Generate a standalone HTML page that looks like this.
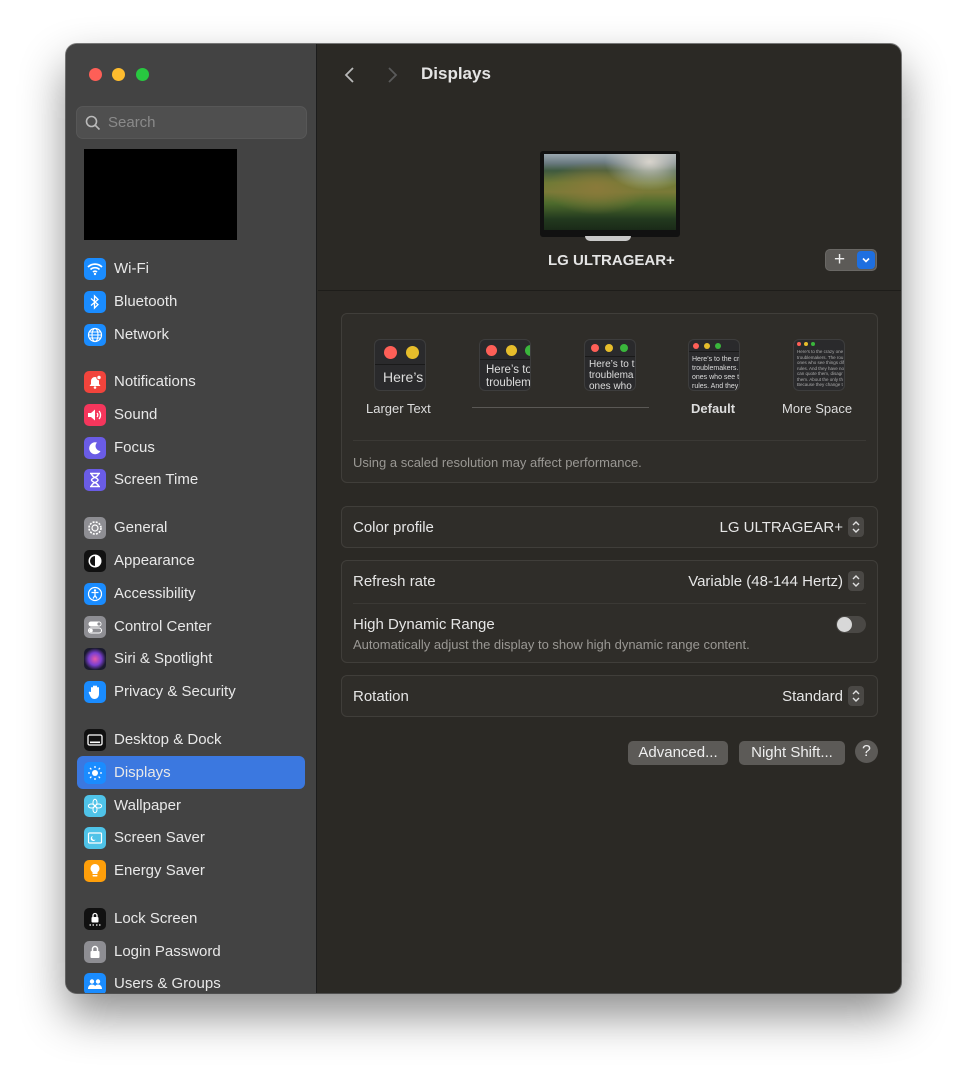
<!DOCTYPE html>
<html><head><meta charset="utf-8"><style>
*{box-sizing:border-box;margin:0;padding:0}
body{width:966px;height:1080px;background:#fff;font-family:"Liberation Sans",sans-serif;position:relative;overflow:hidden}
.win{position:absolute;left:66px;top:44px;width:835px;height:949px;border-radius:11px;overflow:hidden;background:#2b2925;box-shadow:0 22px 45px rgba(0,0,0,.45),0 0 0 1px rgba(0,0,0,.5)}
.side{position:absolute;left:0;top:0;width:251px;height:100%;background:#434343;border-right:1px solid #1c1c1c}
.dot{position:absolute;top:24px;width:13px;height:13px;border-radius:50%}
.search{position:absolute;left:10px;top:62px;width:231px;height:33px;border-radius:7px;background:#4f4f4f;border:1px solid #575757;color:#8a8a8a;font-size:15px;line-height:31px;padding-left:31px}
.item{position:absolute;left:18px;height:24px;color:#e8e8e8;font-size:15px;line-height:24px;padding-left:30px;white-space:nowrap}
.ic{position:absolute;left:0;top:1px;width:22px;height:22px;border-radius:5px;display:flex;align-items:center;justify-content:center;color:#fff;font-size:13px}
.sel{position:absolute;left:11px;top:712px;width:228px;height:33px;border-radius:6px;background:#3b78e0}
.main{position:absolute;left:252px;top:0;right:0;height:100%}
.t{position:absolute;color:#e6e6e6;white-space:nowrap}
.box{position:absolute;left:23px;width:537px;border:1px solid #403e3a;background:#2f2d29;border-radius:6px}
.pop{display:inline-block;width:16px;height:20px;background:#4a4845;border-radius:4px;vertical-align:middle;margin-left:5px;position:relative;top:-1px}
.th{position:absolute;top:295px;width:52px;height:52px;border-radius:6px;background:#2a2a2c;border:1px solid #3d3d3d;overflow:hidden}
.th .bar{border-bottom:1px solid #1a1a1a;position:relative}
.th i{position:absolute;border-radius:50%}
.th p{color:#ddd;white-space:nowrap;padding-left:4px}
.btn{position:absolute;top:697px;height:24px;border-radius:5px;background:#5c5a57;color:#eee;font-size:15px;line-height:24px;text-align:center}
</style></head><body>
<div class="win">
 <div class="side">
  <div class="dot" style="left:23px;background:#fe5f57"></div>
  <div class="dot" style="left:46px;background:#febc2e"></div>
  <div class="dot" style="left:70px;background:#28c840"></div>
  <div class="search"><svg style="position:absolute;left:8px;top:8px" width="16" height="16" viewBox="0 0 16 16"><circle cx="6.5" cy="6.5" r="5" fill="none" stroke="#bbb" stroke-width="1.6"/><path d="M10 10l4.5 4.5" stroke="#bbb" stroke-width="1.6"/></svg>Search</div>
  <div style="position:absolute;left:18px;top:105px;width:153px;height:91px;background:#000"></div>
  <div class="sel"></div>
  <div class="item" style="top:213px"><span class="ic" style="background:#1a8cff">
   <svg width="16" height="14" viewBox="0 0 16 14"><path d="M1 5a10 10 0 0 1 14 0M3.5 7.5a6.5 6.5 0 0 1 9 0M6 10a3 3 0 0 1 4 0" fill="none" stroke="#fff" stroke-width="1.7"/><circle cx="8" cy="12" r="1.2" fill="#fff"/></svg></span>Wi-Fi</div>
  <div class="item" style="top:246px"><span class="ic" style="background:#1a8cff">
   <svg width="10" height="16" viewBox="0 0 10 16"><path d="M1 4.5l7 6-3.5 3.5V2L8 5.5 1 11.5" fill="none" stroke="#fff" stroke-width="1.3"/></svg></span>Bluetooth</div>
  <div class="item" style="top:279px"><span class="ic" style="background:#1a8cff">
   <svg width="16" height="16" viewBox="0 0 16 16"><circle cx="8" cy="8" r="6.5" fill="none" stroke="#fff" stroke-width="1.2"/><ellipse cx="8" cy="8" rx="3" ry="6.5" fill="none" stroke="#fff" stroke-width="1.1"/><path d="M1.5 8h13M2.5 5h11M2.5 11h11" stroke="#fff" stroke-width="1"/></svg></span>Network</div>
  <div class="item" style="top:326px"><span class="ic" style="background:#f2443c">
   <svg width="14" height="14" viewBox="0 0 14 14"><path d="M7 2a4 4 0 0 0-4 4v3L1.5 11h11L11 9V6a4 4 0 0 0-4-4z" fill="#fff"/><circle cx="7" cy="12.5" r="1.3" fill="#fff"/><circle cx="11" cy="2.5" r="2.2" fill="#fff" stroke="#f2443c"/></svg></span>Notifications</div>
  <div class="item" style="top:359px"><span class="ic" style="background:#f5365c">
   <svg width="16" height="14" viewBox="0 0 16 14"><path d="M1 5h3l4-3.5v11L4 9H1z" fill="#fff"/><path d="M10 5a3 3 0 0 1 0 4M12 3a6 6 0 0 1 0 8" fill="none" stroke="#fff" stroke-width="1.3"/></svg></span>Sound</div>
  <div class="item" style="top:392px"><span class="ic" style="background:#6a5ce6">
   <svg width="14" height="14" viewBox="0 0 14 14"><path d="M9 1.5A6 6 0 1 0 12.5 10 5 5 0 0 1 9 1.5z" fill="#fff"/></svg></span>Focus</div>
  <div class="item" style="top:424px"><span class="ic" style="background:#6a5ce6">
   <svg width="12" height="16" viewBox="0 0 12 16"><path d="M1 1.5h10M1 14.5h10M2.5 1.5c0 4 6.5 4 6.5 6.5S2.5 10.5 2.5 14.5M9.5 1.5c0 4-7 4-7 6.5s7 2.5 7 6.5" fill="none" stroke="#fff" stroke-width="1.4"/></svg></span>Screen Time</div>
  <div class="item" style="top:472px"><span class="ic" style="background:#8e8e93">
   <svg width="16" height="16" viewBox="0 0 16 16"><circle cx="8" cy="8" r="6" fill="none" stroke="#fff" stroke-width="1.6" stroke-dasharray="2 1.2"/><circle cx="8" cy="8" r="3" fill="none" stroke="#fff" stroke-width="1.2"/></svg></span>General</div>
  <div class="item" style="top:505px"><span class="ic" style="background:#111">
   <svg width="16" height="16" viewBox="0 0 16 16"><circle cx="8" cy="8" r="6.5" fill="#fff"/><path d="M8 3a5 5 0 0 0 0 10z" fill="#111"/></svg></span>Appearance</div>
  <div class="item" style="top:538px"><span class="ic" style="background:#1a8cff">
   <svg width="16" height="16" viewBox="0 0 16 16"><circle cx="8" cy="8" r="6.5" fill="none" stroke="#fff" stroke-width="1.2"/><circle cx="8" cy="4.5" r="1.2" fill="#fff"/><path d="M4.5 6.5h7M8 6.5v3l-2 3M8 9.5l2 3" fill="none" stroke="#fff" stroke-width="1.2"/></svg></span>Accessibility</div>
  <div class="item" style="top:571px"><span class="ic" style="background:#8e8e93">
   <svg width="16" height="14" viewBox="0 0 16 14"><rect x="1.5" y="1.5" width="13" height="5" rx="2.5" fill="#fff"/><rect x="1.5" y="8" width="13" height="5" rx="2.5" fill="none" stroke="#fff"/><circle cx="12" cy="4" r="1.6" fill="#8e8e93"/><circle cx="4" cy="10.5" r="1.8" fill="#fff"/></svg></span>Control Center</div>
  <div class="item" style="top:603px"><span class="ic" style="background:radial-gradient(circle,#e85aa8 0,#7a3fd0 40%,#1a1a2e 70%)"></span>Siri &amp; Spotlight</div>
  <div class="item" style="top:636px"><span class="ic" style="background:#1a8cff">
   <svg width="14" height="16" viewBox="0 0 14 16"><path d="M3 8V4a1 1 0 0 1 2 0V2.5a1 1 0 0 1 2 0v0a1 1 0 0 1 2 0V4a1 1 0 0 1 2 0v6c0 3-2 5-4.5 5S3 13.5 2 11.5L.8 9a1 1 0 0 1 1.7-1z" fill="#fff"/></svg></span>Privacy &amp; Security</div>
  <div class="item" style="top:684px"><span class="ic" style="background:#111">
   <svg width="16" height="14" viewBox="0 0 16 14"><rect x="1" y="2" width="14" height="10" rx="1.5" fill="none" stroke="#fff" stroke-width="1.3"/><rect x="3" y="8.5" width="10" height="1.6" fill="#fff"/></svg></span>Desktop &amp; Dock</div>
  <div class="item" style="top:717px"><span class="ic" style="background:#1a8cff">
   <svg width="16" height="16" viewBox="0 0 16 16"><circle cx="8" cy="8" r="3" fill="#fff"/><path d="M8 1v2M8 13v2M1 8h2M13 8h2M3 3l1.4 1.4M11.6 11.6L13 13M3 13l1.4-1.4M11.6 4.4L13 3" stroke="#fff" stroke-width="1.3"/></svg></span>Displays</div>
  <div class="item" style="top:750px"><span class="ic" style="background:#4fc3e8">
   <svg width="16" height="16" viewBox="0 0 16 16"><g fill="none" stroke="#fff" stroke-width="1"><ellipse cx="8" cy="4.5" rx="2" ry="3.2"/><ellipse cx="8" cy="11.5" rx="2" ry="3.2"/><ellipse cx="4.5" cy="8" rx="3.2" ry="2"/><ellipse cx="11.5" cy="8" rx="3.2" ry="2"/></g></svg></span>Wallpaper</div>
  <div class="item" style="top:782px"><span class="ic" style="background:#4fc3e8">
   <svg width="16" height="14" viewBox="0 0 16 14"><rect x="1.5" y="2" width="13" height="10" rx="1" fill="none" stroke="#fff" stroke-width="1.2"/><path d="M6 5a2.5 2.5 0 1 0 2.5 3.5A2 2 0 0 1 6 5z" fill="#fff"/></svg></span>Screen Saver</div>
  <div class="item" style="top:815px"><span class="ic" style="background:#ff9f0a">
   <svg width="12" height="16" viewBox="0 0 12 16"><path d="M6 1a4.5 4.5 0 0 0-2.5 8.2V11h5V9.2A4.5 4.5 0 0 0 6 1z" fill="#fff"/><rect x="3.5" y="12" width="5" height="1.5" rx=".7" fill="#fff"/></svg></span>Energy Saver</div>
  <div class="item" style="top:863px"><span class="ic" style="background:#111">
   <svg width="16" height="16" viewBox="0 0 16 16"><rect x="4.5" y="6" width="7" height="5.5" rx="1" fill="#fff"/><path d="M6 6V4.5a2 2 0 0 1 4 0V6" fill="none" stroke="#fff" stroke-width="1.3"/><path d="M2.5 14h1.5M5.5 14h1.5M9 14h1.5M12 14h1.5" stroke="#fff" stroke-width="1.3"/></svg></span>Lock Screen</div>
  <div class="item" style="top:896px"><span class="ic" style="background:#8e8e93">
   <svg width="14" height="16" viewBox="0 0 14 16"><rect x="2.5" y="7" width="9" height="7" rx="1" fill="#fff"/><path d="M4.5 7V5a2.5 2.5 0 0 1 5 0v2" fill="none" stroke="#fff" stroke-width="1.5"/></svg></span>Login Password</div>
  <div class="item" style="top:928px"><span class="ic" style="background:#1a8cff">
   <svg width="16" height="14" viewBox="0 0 16 14"><circle cx="5" cy="4.5" r="2.2" fill="#fff"/><circle cx="11" cy="4.5" r="2.2" fill="#fff"/><path d="M1 12c0-3 1.8-4.5 4-4.5S9 9 9 12zM7.5 12c0-3 1.5-4.5 3.5-4.5S15 9 15 12z" fill="#fff"/></svg></span>Users &amp; Groups</div>
 </div>
 <div class="main">
  <svg style="position:absolute;left:26px;top:22px" width="12" height="18" viewBox="0 0 12 18"><path d="M9 2L2 9l7 7" fill="none" stroke="#b8b8b8" stroke-width="1.8"/></svg>
  <svg style="position:absolute;left:68px;top:22px" width="12" height="18" viewBox="0 0 12 18"><path d="M3 2l7 7-7 7" fill="none" stroke="#5a5a5a" stroke-width="1.8"/></svg>
  <div class="t" style="left:103px;top:20px;font-size:17px;font-weight:bold;color:#e4e4e4">Displays</div>
  <div style="position:absolute;left:222px;top:107px;width:140px;height:86px;background:#111;border-radius:3px;padding:3px 4px 7px">
   <div style="width:100%;height:100%;background:radial-gradient(ellipse at 80% 10%,#d8d4cc 0,rgba(200,200,195,0) 30%),radial-gradient(ellipse at 40% 45%,#8a7a3a 0,rgba(120,110,50,0) 45%),linear-gradient(180deg,#9aa8b0 0%,#6a7a80 12%,#3f5a3f 22%,#6f7a35 38%,#7a7a38 50%,#4d6a2c 65%,#233a1f 85%,#1a2a18 100%)"></div></div>
  <div style="position:absolute;left:267px;top:192px;width:46px;height:5px;border-radius:0 0 20px 20px;background:#c8c8c8"></div>
  <div class="t" style="left:230px;top:208px;font-size:15px;font-weight:bold;color:#e4e4e4">LG ULTRAGEAR+</div>
  <div style="position:absolute;left:507px;top:205px;width:52px;height:22px;border-radius:5px;background:#5c5a57;border:1px solid #6a6865">
   <span style="position:absolute;left:8px;top:-1px;color:#eee;font-size:19px;line-height:22px">+</span>
   <span style="position:absolute;left:31px;top:1px;width:18px;height:18px;border-radius:4px;background:#1e6fe0"><svg width="18" height="18" viewBox="0 0 18 18"><path d="M6 7.5l3 3 3-3" fill="none" stroke="#fff" stroke-width="1.6"/></svg></span></div>
  <div style="position:absolute;left:0;top:246px;width:100%;height:1px;background:#1e1d1a"></div>

  <div class="box" style="top:269px;height:170px">
   <div style="position:absolute;left:130px;top:93px;width:177px;height:1px;background:#5a5855"></div>
   <div style="position:absolute;left:11px;top:126px;right:11px;height:1px;background:#3b3935"></div>
   <div class="t" style="left:11px;top:141px;font-size:13px;color:#9a9894">Using a scaled resolution may affect performance.</div>
   <div class="t" style="left:24px;top:87px;font-size:13px;color:#ddd">Larger Text</div>
   <div class="t" style="left:349px;top:87px;font-size:13px;font-weight:bold;color:#ddd">Default</div>
   <div class="t" style="left:440px;top:87px;font-size:13px;color:#ddd">More Space</div>
  </div>
  <div class="th" style="left:56px"><div class="bar" style="height:25px"><i style="left:9px;top:6px;width:13px;height:13px;background:#fe5f57"></i><i style="left:31px;top:6px;width:13px;height:13px;background:#e6bd2b"></i></div><p style="font-size:14px;padding-left:8px;padding-top:4px">Here’s</p></div>
  <div class="th" style="left:161px"><div class="bar" style="height:20px"><i style="left:6px;top:5px;width:11px;height:11px;background:#fe5f57"></i><i style="left:26px;top:5px;width:11px;height:11px;background:#e6bd2b"></i><i style="left:45px;top:5px;width:11px;height:11px;background:#3ab63c"></i></div><p style="font-size:11.5px;line-height:13px;padding-left:6px;padding-top:4px">Here’s to<br>troublem</p></div>
  <div class="th" style="left:266px"><div class="bar" style="height:17px"><i style="left:6px;top:4px;width:8px;height:8px;background:#fe5f57"></i><i style="left:20px;top:4px;width:8px;height:8px;background:#e6bd2b"></i><i style="left:35px;top:4px;width:8px;height:8px;background:#3ab63c"></i></div><p style="font-size:10px;line-height:11px;padding-top:2px">Here’s to t<br>troublema<br>ones who</p></div>
  <div class="th" style="left:370px"><div class="bar" style="height:12px"><i style="left:4px;top:3px;width:6px;height:6px;background:#fe5f57"></i><i style="left:15px;top:3px;width:6px;height:6px;background:#e6bd2b"></i><i style="left:26px;top:3px;width:6px;height:6px;background:#3ab63c"></i></div><p style="font-size:7px;line-height:9px;padding-top:3px;padding-left:3px">Here’s to the cr<br>troublemakers.<br>ones who see t<br>rules. And they</p></div>
  <div class="th" style="left:475px"><div class="bar" style="height:9px;border:0"><i style="left:3px;top:2px;width:4px;height:4px;background:#fe5f57"></i><i style="left:10px;top:2px;width:4px;height:4px;background:#e6bd2b"></i><i style="left:17px;top:2px;width:4px;height:4px;background:#3ab63c"></i></div><p style="font-size:4.5px;line-height:5.5px;padding-left:3px;color:#aaa">Here's to the crazy one<br>troublemakers. The rou<br>ones who see things dif<br>rules. And they have no<br>can quote them, disagr<br>them. About the only th<br>Because they change t</p></div>

  <div class="box" style="top:462px;height:42px"><div class="t" style="left:11px;top:12px;font-size:15px">Color profile</div><div class="t" style="right:13px;top:11px;font-size:15px">LG ULTRAGEAR+<span class="pop"><svg width="16" height="20" viewBox="0 0 16 20"><path d="M5 8l3-3 3 3M5 12l3 3 3-3" fill="none" stroke="#e0e0e0" stroke-width="1.4"/></svg></span></div></div>
  <div class="box" style="top:516px;height:103px">
   <div class="t" style="left:11px;top:12px;font-size:15px">Refresh rate</div><div class="t" style="right:13px;top:11px;font-size:15px">Variable (48-144 Hertz)<span class="pop"><svg width="16" height="20" viewBox="0 0 16 20"><path d="M5 8l3-3 3 3M5 12l3 3 3-3" fill="none" stroke="#e0e0e0" stroke-width="1.4"/></svg></span></div>
   <div style="position:absolute;left:11px;right:11px;top:42px;height:1px;background:#3b3935"></div>
   <div class="t" style="left:11px;top:55px;font-size:15px">High Dynamic Range</div>
   <div class="t" style="left:11px;top:76px;font-size:13px;color:#9a9894">Automatically adjust the display to show high dynamic range content.</div>
   <div style="position:absolute;right:11px;top:55px;width:30px;height:17px;border-radius:9px;background:#4a4845"><div style="width:15px;height:15px;margin:1px;border-radius:50%;background:#d8d8d8"></div></div>
  </div>
  <div class="box" style="top:631px;height:42px"><div class="t" style="left:11px;top:12px;font-size:15px">Rotation</div><div class="t" style="right:13px;top:11px;font-size:15px">Standard<span class="pop"><svg width="16" height="20" viewBox="0 0 16 20"><path d="M5 8l3-3 3 3M5 12l3 3 3-3" fill="none" stroke="#e0e0e0" stroke-width="1.4"/></svg></span></div></div>
  <div class="btn" style="left:310px;width:100px">Advanced...</div>
  <div class="btn" style="left:421px;width:106px">Night Shift...</div>
  <div style="position:absolute;left:537px;top:696px;width:23px;height:23px;border-radius:50%;background:#5c5a57;color:#eee;font-size:16px;text-align:center;line-height:23px">?</div>
 </div>
</div>
</body></html>
